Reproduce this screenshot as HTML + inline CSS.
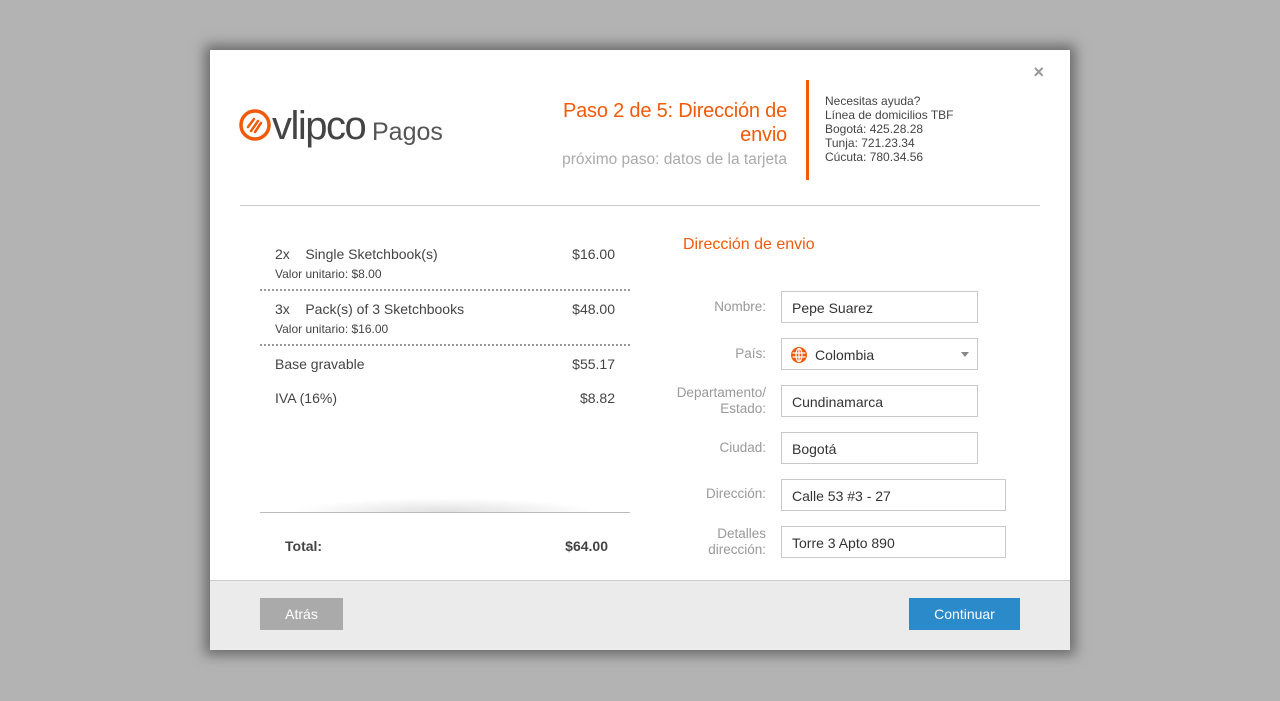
<!DOCTYPE html><html><head><meta charset="utf-8"><style>
*{margin:0;padding:0;box-sizing:border-box}
body{width:1280px;height:701px;background:#b3b3b3;font-family:"Liberation Sans",sans-serif;position:relative;overflow:hidden}
.m{position:absolute;left:210px;top:50px;width:860px;height:600px;background:#fff;box-shadow:0 0 12px 5px #6a6a6a}
.a{position:absolute;white-space:nowrap}
.f{position:absolute;height:32px;border:1px solid #c8c8c8;font-size:14px;color:#333;padding:8px 10px;background:#fff}
.l{position:absolute;right:304px;text-align:right;font-size:13.5px;color:#999;line-height:16px}
.dot{position:absolute;left:50px;width:370px;border-top:2px dotted #999}
</style></head><body>
<div class="m">
<div class="a" style="right:26px;top:12px;font-size:18px;color:#999;font-weight:bold">×</div>
<svg class="a" style="left:29px;top:59px" width="34" height="34" viewBox="0 0 34 34"><circle cx="16" cy="16" r="14" fill="none" stroke="#f15a0a" stroke-width="3.5"/><path d="M9 18l6-8M12 22l7-10M16 23l6-9" stroke="#f15a0a" stroke-width="2.5" stroke-linecap="round"/></svg>
<div class="a" style="left:62px;top:54px;font-size:40px;color:#444;letter-spacing:-1.5px">vlipco</div>
<div class="a" style="left:162px;top:68px;font-size:25px;color:#555">Pagos</div>
<div class="a" style="right:283px;top:49px;font-size:20px;color:#f15a0a;text-align:right;line-height:24px;letter-spacing:-0.2px">Paso 2 de 5: Dirección de<br>envio</div>
<div class="a" style="right:283px;top:101px;font-size:15.5px;color:#aaa">próximo paso: datos de la tarjeta</div>
<div class="a" style="left:596px;top:30px;width:3px;height:100px;background:#f15a0a"></div>
<div class="a" style="left:615px;top:44px;font-size:12px;color:#444;line-height:14px">Necesitas ayuda?<br>Línea de domicilios TBF<br>Bogotá: 425.28.28<br>Tunja: 721.23.34<br>Cúcuta: 780.34.56</div>
<div class="a" style="left:30px;top:155px;width:800px;border-top:1px solid #ccc"></div>

<div class="a" style="left:65px;top:196px;font-size:14px;color:#444">2x&nbsp;&nbsp;&nbsp; Single Sketchbook(s)</div>
<div class="a" style="left:65px;top:217px;font-size:12px;color:#444">Valor unitario: $8.00</div>
<div class="a" style="right:455px;top:196px;font-size:14px;color:#444">$16.00</div>
<div class="dot" style="top:239px"></div>
<div class="a" style="left:65px;top:251px;font-size:14px;color:#444">3x&nbsp;&nbsp;&nbsp; Pack(s) of 3 Sketchbooks</div>
<div class="a" style="left:65px;top:272px;font-size:12px;color:#444">Valor unitario: $16.00</div>
<div class="a" style="right:455px;top:251px;font-size:14px;color:#444">$48.00</div>
<div class="dot" style="top:294px"></div>
<div class="a" style="left:65px;top:306px;font-size:14px;color:#444">Base gravable</div>
<div class="a" style="right:455px;top:306px;font-size:14px;color:#444">$55.17</div>
<div class="a" style="left:65px;top:340px;font-size:14px;color:#444">IVA (16%)</div>
<div class="a" style="right:455px;top:340px;font-size:14px;color:#444">$8.82</div>
<div class="a" style="left:80px;top:448px;width:310px;height:14px;background:radial-gradient(ellipse at 50% 100%,rgba(0,0,0,0.12),rgba(0,0,0,0) 70%)"></div>
<div class="a" style="left:50px;top:462px;width:370px;border-top:1px solid #bbb"></div>
<div class="a" style="left:75px;top:488px;font-size:14px;color:#444;font-weight:bold">Total:</div>
<div class="a" style="right:462px;top:488px;font-size:14px;color:#444;font-weight:bold">$64.00</div>

<div class="a" style="left:473px;top:186px;font-size:16px;color:#f15a0a">Dirección de envio</div>
<div class="l" style="top:249px">Nombre:</div><div class="f" style="left:571px;top:241px;width:197px">Pepe Suarez</div>
<div class="l" style="top:296px">País:</div><div class="f" style="left:571px;top:288px;width:197px;padding-left:33px">Colombia</div>
<svg class="a" style="left:581px;top:297px" width="16" height="16" viewBox="0 0 16 16"><circle cx="8" cy="8" r="8" fill="#f15a0a"/><g stroke="#fff" stroke-width="1.2" fill="none"><ellipse cx="8" cy="8" rx="3" ry="6.5"/><path d="M1.5 6h13M1.5 10h13M8 1.5v13"/></g></svg>
<div class="a" style="left:751px;top:302px;border-left:4px solid transparent;border-right:4px solid transparent;border-top:5px solid #888"></div>
<div class="l" style="top:335px">Departamento/<br>Estado:</div><div class="f" style="left:571px;top:335px;width:197px">Cundinamarca</div>
<div class="l" style="top:390px">Ciudad:</div><div class="f" style="left:571px;top:382px;width:197px">Bogotá</div>
<div class="l" style="top:436px">Dirección:</div><div class="f" style="left:571px;top:429px;width:225px">Calle 53 #3 - 27</div>
<div class="l" style="top:476px">Detalles<br>dirección:</div><div class="f" style="left:571px;top:476px;width:225px">Torre 3 Apto 890</div>

<div class="a" style="left:0;top:530px;width:860px;height:70px;background:#ebebeb;border-top:1px solid #ccc"></div>
<div class="a" style="left:50px;top:548px;width:83px;height:32px;background:#aaa;color:#fff;font-size:14px;text-align:center;line-height:32px">Atrás</div>
<div class="a" style="left:699px;top:548px;width:111px;height:32px;background:#2b8ac9;color:#fff;font-size:14px;text-align:center;line-height:32px">Continuar</div>
</div>
</body></html>
